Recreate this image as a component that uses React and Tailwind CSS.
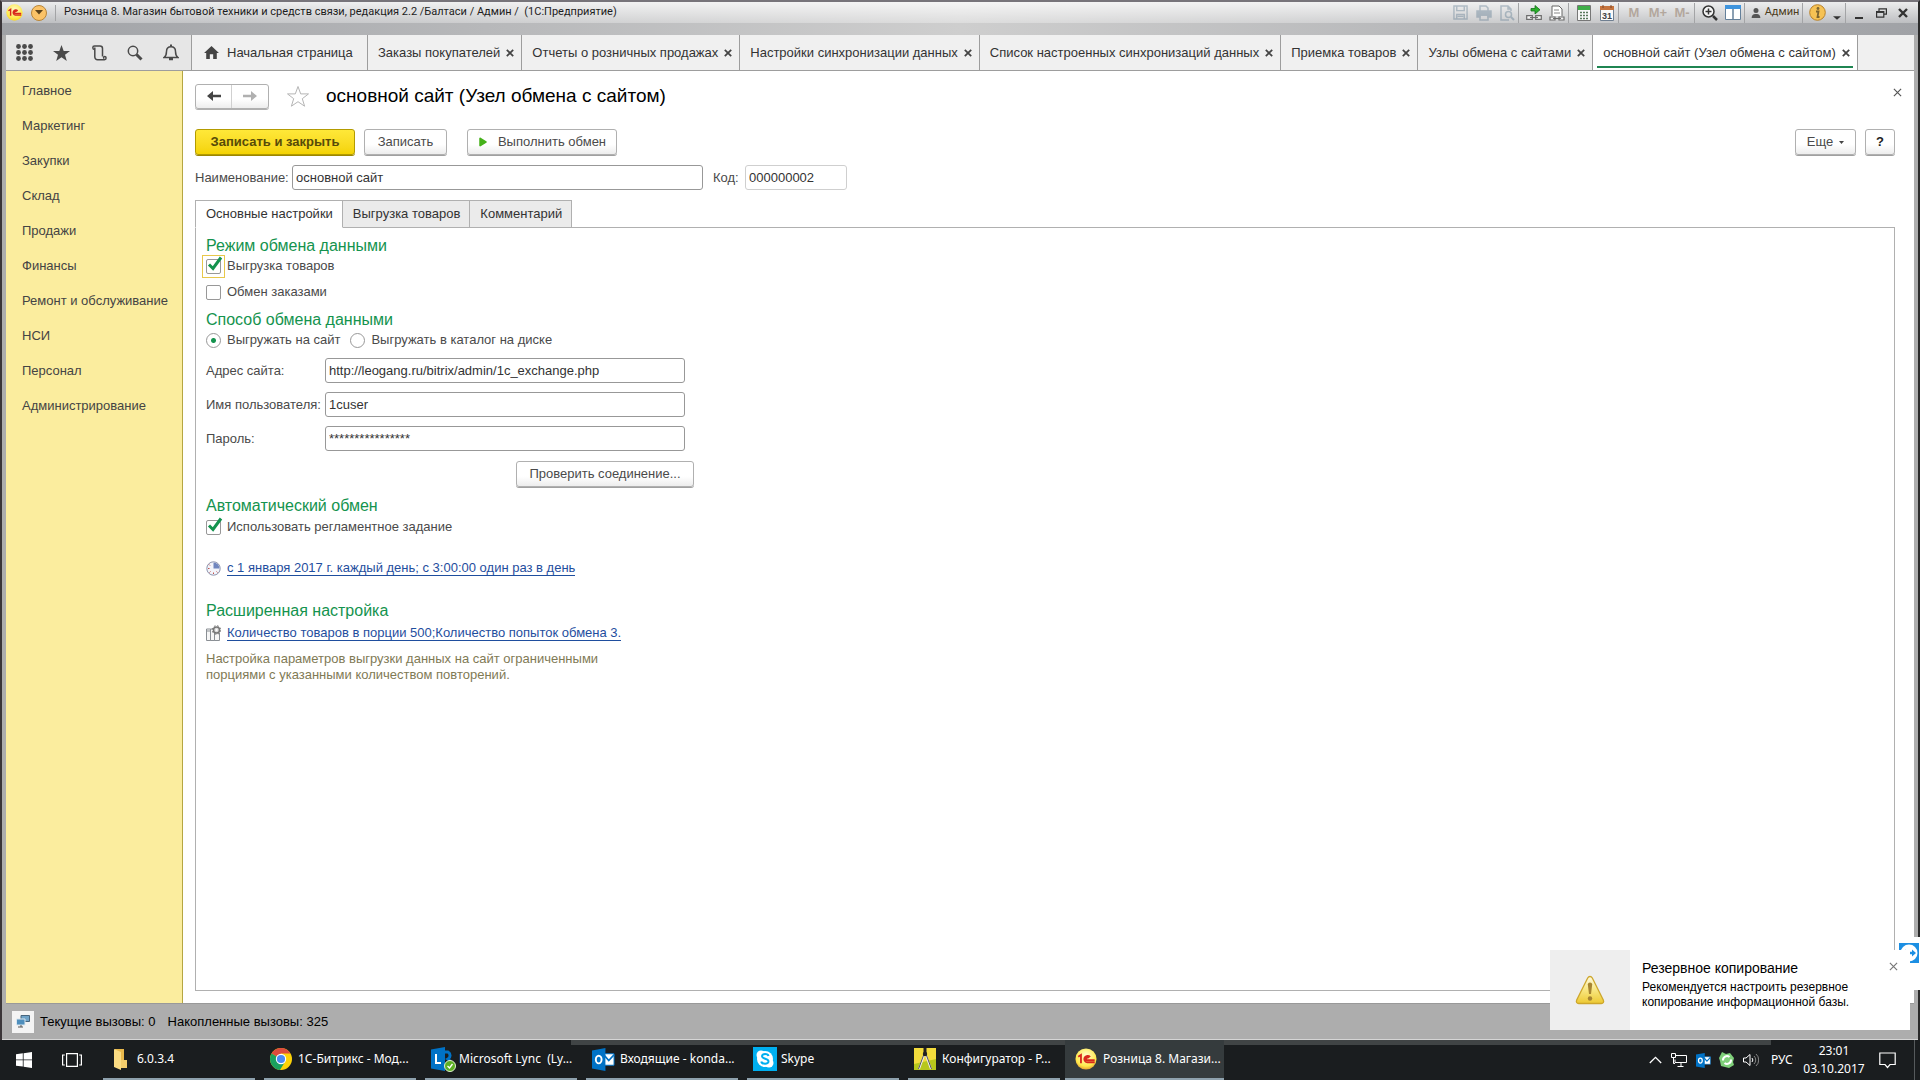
import { useState } from 'react';
import { FaStar, FaUser, FaPlay } from 'react-icons/fa6';
import { clsx } from 'clsx';

const openTabs = [
  { title: 'Заказы покупателей' },
  { title: 'Отчеты о розничных продажах' },
  { title: 'Настройки синхронизации данных' },
  { title: 'Список настроенных синхронизаций данных' },
  { title: 'Приемка товаров' },
  { title: 'Узлы обмена с сайтами' },
  { title: 'основной сайт (Узел обмена с сайтом)', active: true },
];

const sections = [
  'Главное',
  'Маркетинг',
  'Закупки',
  'Склад',
  'Продажи',
  'Финансы',
  'Ремонт и обслуживание',
  'НСИ',
  'Персонал',
  'Администрирование',
];

const formTabs = ['Основные настройки', 'Выгрузка товаров', 'Комментарий'];

const Cross = ({ size = 9, width = 2 }) => (
  <svg width={size} height={size} viewBox="0 0 10 10" fill="none" stroke="currentColor" strokeWidth={width}>
    <path d="M1 1l8 8M9 1l-8 8" />
  </svg>
);

const OneC = ({ size, id, rim }) => (
  <svg width={size} height={size} viewBox="0 0 24 24">
    <defs>
      <radialGradient id={id} cx="0.5" cy="0.35" r="0.7">
        <stop offset="0" stopColor="#fffbd0" />
        <stop offset="0.7" stopColor="#ffe94a" />
        <stop offset="1" stopColor={rim} />
      </radialGradient>
    </defs>
    <circle cx="12" cy="12" r="11.5" fill={`url(#${id})`} />
    <path d="M3.500 9.500l3-2v9M16.500 9.800a3.600 3.600 0 1 0-3.200 5.900H21.500M14.800 11.200a1.500 1.500 0 1 0-1.400 2.200H21.500" fill="none" stroke="#d8281c" strokeWidth="2" />
  </svg>
);

const Separator = () => <span className="h-5 w-1 shrink-0 border-l border-[#a3a4a6]" />;

const ToolIcon = ({ label, faded, children }) => (
  <button aria-label={label} className={clsx('flex h-5 w-[23px] shrink-0 items-center justify-center', faded && 'opacity-40')}>
    {children}
  </button>
);

const LinkChain = () => (
  <path d="M1 12h5v3H1zM10 12h5v3h-5zM4 13.500h8" fill="#f4f4f4" stroke="#6d6d6d" strokeWidth="1.200" />
);

const TitleBar = () => (
  <header className="h-[33px] bg-linear-to-r from-[#a0a2a6] via-[#cecece] to-[#a0a2a6] text-xs text-[#1c1c1c]">
    <div className="flex h-[21px] items-center bg-linear-to-b from-white/80 to-white/30 pr-[5px] pl-1">
      <div className="flex items-center gap-2">
        <OneC size={17} id="onec-title" rim="#f5cf1c" />
        <button aria-label="Меню" className="flex size-4 items-center justify-center rounded-full border border-[#b98538] bg-[#fbc368]">
          <svg width="8" height="5" viewBox="0 0 8 5"><path d="M0 0h8L4 4.500z" fill="#5c431c" /></svg>
        </button>
        <span className="h-4 border-l border-[#a3a4a6]" />
        <span className="font-[Roboto,sans-serif] text-[11px] whitespace-pre">
          Розница 8. Магазин бытовой техники и средств связи, редакция 2.2 /Балтаси / Админ /  (1С:Предприятие)
        </span>
      </div>
      <div className="ml-auto flex items-center">
        <ToolIcon label="Сохранить" faded>
          <svg width="15" height="15" viewBox="0 0 16 16" fill="none" stroke="#5d7a90" strokeWidth="1.500"><path d="M1 1h14v14H1zM4 1v5h8V1M4 15v-5h8v5M5 12h6" /></svg>
        </ToolIcon>
        <ToolIcon label="Печать" faded>
          <svg width="16" height="16" viewBox="0 0 16 16" fill="none" stroke="#5d7a90" strokeWidth="1.500"><path d="M4 6V1h6l2 2v3M4 10h8v5H4z" /><path d="M1 6h14v6h-3v-2H4v2H1z" fill="#5d7a90" /></svg>
        </ToolIcon>
        <ToolIcon label="Просмотр" faded>
          <svg width="16" height="16" viewBox="0 0 16 16" fill="none" stroke="#5d7a90" strokeWidth="1.500"><path d="M10 15H2V1h7l3 3v2M9 1v3h3" /><circle cx="9.500" cy="9.500" r="3" /><path d="M12 12l3 3" strokeWidth="2" /></svg>
        </ToolIcon>
        <Separator />
        <ToolIcon label="Получить ссылку">
          <svg width="16" height="16" viewBox="0 0 16 16"><path d="M.7 10.700h5.600v3.600H.7zM9.700 10.700h5.600v3.600H9.700zM4 12.500h8" fill="#f4f4f4" stroke="#6d6d6d" strokeWidth="1.200" /><path d="M5 3.500h4V.5l5 4.300L9 9V6H5z" fill="#2bb02b" stroke="#14701a" strokeWidth="0.800" /></svg>
        </ToolIcon>
        <ToolIcon label="Перейти по ссылке">
          <svg width="16" height="16" viewBox="0 0 16 16"><path d="M3 11V1h7l3 3v7" fill="#fff" stroke="#666" /><path d="M5 5h5M5 8h6" stroke="#888" /><LinkChain /></svg>
        </ToolIcon>
        <Separator />
        <ToolIcon label="Калькулятор">
          <svg width="14" height="16" viewBox="0 0 14 16"><path d="M.5.500h13v15H.5z" fill="#f8f8f8" stroke="#777" /><path d="M1 1h12v4H1z" fill="#3fae49" /><path d="M3 7.500h8M3 10.500h8M3 13.500h8" stroke="#5a7a5c" strokeWidth="1.700" strokeDasharray="2 1" /></svg>
        </ToolIcon>
        <ToolIcon label="Календарь">
          <svg width="14" height="16" viewBox="0 0 14 16">
            <path d="M.5 2.500h13v13H.5z" fill="#fafafa" stroke="#6f7f91" /><path d="M0 1h14v4H0z" fill="#c5733d" /><path d="M3 0v3M11 0v3" stroke="#7d4728" />
            <text x="7" y="13.500" textAnchor="middle" fontSize="9" fontWeight="bold" fontFamily="Liberation Sans, sans-serif" fill="#444">31</text>
          </svg>
        </ToolIcon>
        <Separator />
        {['M', 'M+', 'M-'].map((m) => (
          <button key={m} className="w-6 text-center font-['Liberation_Sans',sans-serif] text-[13px] font-bold text-[#b3a79d]">{m}</button>
        ))}
        <Separator />
        <ToolIcon label="Масштаб">
          <svg width="16" height="16" viewBox="0 0 16 16" fill="none" stroke="#333" strokeWidth="1.500"><circle cx="6.500" cy="6.500" r="5.500" fill="#f6f6f6" /><path d="M3.500 6.500h6M6.500 3.500v6" /><path d="M11 11l4 4" strokeWidth="2.500" /></svg>
        </ToolIcon>
        <ToolIcon label="Панели">
          <svg width="16" height="15" viewBox="0 0 16 15"><path d="M.5.500h15v14H.5z" fill="#fff" stroke="#64809a" /><path d="M0 0h16v4H0z" fill="#3f94dd" /><path d="M8 4v11" stroke="#64809a" strokeWidth="1.500" /></svg>
        </ToolIcon>
        <Separator />
        <button className="flex w-[54px] items-center justify-center gap-1 font-[Roboto,sans-serif] text-[11px] text-[#4c3d1d]">
          <FaUser size={10} className="text-[#555]" />
          Админ
        </button>
        <Separator />
        <ToolIcon label="О программе">
          <svg width="17" height="17" viewBox="0 0 17 17"><circle cx="8.500" cy="8.500" r="7.800" fill="#f6c254" stroke="#b9822a" /><circle cx="9" cy="4.500" r="1.400" fill="#7c6430" /><path d="M7 7.500h2.500L8.500 13h2" fill="none" stroke="#7c6430" strokeWidth="1.800" /></svg>
        </ToolIcon>
        <button aria-label="Еще команды" className="flex h-5 w-4 items-end justify-center pb-[3px]">
          <svg width="8" height="4" viewBox="0 0 9 4"><path d="M0 0h9L4.500 4z" fill="#333" /></svg>
        </button>
        <Separator />
        <button aria-label="Свернуть" className="flex h-5 w-5 items-end justify-center pb-1">
          <span className="h-0.5 w-2 bg-[#333]" />
        </button>
        <button aria-label="Развернуть" className="flex h-5 w-6 items-center justify-center">
          <svg width="11" height="10" viewBox="0 0 11 10" fill="none" stroke="#333" strokeWidth="1.200"><path d="M3 3V.8h7.400v5.400H8M.6 3.500h7.200v5.700H.6z" /><path d="M.6 4.200h7.200" strokeWidth="1.500" /></svg>
        </button>
        <button aria-label="Закрыть" className="flex h-5 w-5 items-center justify-center text-[#333]"><Cross size={10} width={2.4} /></button>
      </div>
    </div>
  </header>
);

const TabStrip = () => (
  <nav className="flex h-9 border-b border-[#9d9d9d] bg-[#f0f0f0] text-[#333]">
    <div className="flex w-[185px] shrink-0 items-center justify-between bg-[#e6e6e6] pr-3 pl-[10px] text-[#4a4a4a]">
      <button aria-label="Меню функций">
        <svg width="17" height="17" viewBox="0 0 17 17" fill="currentColor">
          {[2.5, 8.5, 14.5].map((y) => [2.5, 8.5, 14.5].map((x) => <circle key={`${x}${y}`} cx={x} cy={y} r="2.400" />))}
        </svg>
      </button>
      <button aria-label="Избранное">
        <svg width="17" height="16" viewBox="0 0 17 16" fill="currentColor"><path d="M8.500 0l2.200 5.900h6.300l-5 3.900 1.800 6.200-5.300-3.700L3.200 16 5 9.800 0 5.900h6.300z" /></svg>
      </button>
      <button aria-label="История">
        <svg width="16" height="16" viewBox="0 0 16 16" fill="none" stroke="currentColor" strokeWidth="1.500"><path d="M3.500 4.500a1.700 1.700 0 1 1 0-3.400H9a2.500 2.500 0 0 1 2.500 2.500V11.500" /><path d="M3.800 2.500v9.500a2.700 2.700 0 0 0 2.700 2.700h7a1.600 1.600 0 1 0 0-3.200c-1.200 0-1.200 1.700-.2 1.700" /></svg>
      </button>
      <button aria-label="Поиск">
        <svg width="16" height="16" viewBox="0 0 16 16" fill="none" stroke="currentColor"><circle cx="6" cy="6" r="4.700" strokeWidth="1.500" /><path d="M9.500 9.500l5 5" strokeWidth="3" /></svg>
      </button>
      <button aria-label="Оповещения">
        <svg width="16" height="17" viewBox="0 0 16 17" fill="none" stroke="currentColor" strokeWidth="1.500"><path d="M1 13.500c2-1.500 2.500-3 2.500-6 0-3 2-4.800 4.500-4.800s4.500 1.800 4.500 4.800c0 3 .5 4.500 2.500 6z" /><path d="M8 .5v2" strokeWidth="2" /><path d="M6 15h4" strokeWidth="2.500" /></svg>
      </button>
    </div>
    <button className="flex w-44 items-center gap-2 border-l border-[#9d9d9d] pl-3 whitespace-nowrap">
      <svg width="15" height="13" viewBox="0 0 16 14" fill="#444"><path d="M8 0l8 7.500h-2.300V14H9.800V9H6.200v5H2.300V7.500H0z" /></svg>
      Начальная страница
    </button>
    {openTabs.map((tab) => (
      <div
        key={tab.title}
        className={clsx(
          'relative flex items-center gap-[6px] border-l border-[#9d9d9d] pr-[7px] pl-[10px] whitespace-nowrap',
          tab.active && 'border-r bg-white'
        )}
      >
        <button>{tab.title}</button>
        <button aria-label="Закрыть вкладку" className="text-[#444]"><Cross size={8} width={2.2} /></button>
        {tab.active && <span className="absolute inset-x-1 bottom-0.5 h-0.5 bg-[#1f8552]" />}
      </div>
    ))}
  </nav>
);

const Button = ({ className, primary, children, ...props }) => (
  <button
    className={clsx(
      'flex h-[26px] items-center justify-center rounded-[3px] border whitespace-nowrap',
      primary
        ? 'border-[#b39b00] bg-linear-to-b from-[#ffe838] to-[#f4d300] font-bold text-[#574b09] shadow-[0_1px_0_#9c8700]'
        : 'border-[#b0b0b0] bg-linear-to-b from-white from-60% to-[#ededed] shadow-[0_1px_0_#a0a0a0]',
      className
    )}
    {...props}
  >
    {children}
  </button>
);

const Heading = ({ className, children }) => (
  <h2 className={clsx('text-base leading-5 text-[#14934e]', className)}>{children}</h2>
);

const Check = ({ label, focused, defaultChecked }) => {
  const [checked, setChecked] = useState(!!defaultChecked);
  return (
    <label className="flex h-5 w-fit items-center gap-[6px]">
      <span className={clsx('relative flex', focused && 'outline outline-offset-3 outline-[#e8c84a]')}>
        <input
          type="checkbox"
          checked={checked}
          onChange={(e) => setChecked(e.target.checked)}
          className="size-[15px] appearance-none rounded-[2px] border border-[#989898] bg-white focus:outline-none"
        />
        {checked && (
          <svg className="pointer-events-none absolute -top-1 left-0" width="18" height="17" viewBox="0 0 18 17" fill="none" stroke="#14934e" strokeWidth="3">
            <path d="M3 9.500l4 4L15 2.500" />
          </svg>
        )}
      </span>
      {label}
    </label>
  );
};

const Radio = ({ label, checked, onChange }) => (
  <label className="flex items-center gap-[6px]">
    <input
      type="radio"
      name="method"
      checked={checked}
      onChange={onChange}
      className="size-[15px] appearance-none rounded-full border border-[#989898] bg-white checked:bg-[radial-gradient(circle,#14934e_2px,white_3px)]"
    />
    {label}
  </label>
);

const inputClass = 'h-[25px] rounded-[3px] border border-[#989898] bg-white px-[3px] text-[#333] focus:outline-none';

const Field = ({ id, label, ...props }) => (
  <div className="flex items-center">
    <label htmlFor={id} className="w-[119px] shrink-0 whitespace-nowrap">{label}</label>
    <input id={id} className={clsx(inputClass, 'w-[360px]')} {...props} />
  </div>
);

const MainSettings = () => {
  const [method, setMethod] = useState('site');
  return (
    <div className="flex-1 border border-[#b0b0b0] bg-white px-[10px] pt-2">
      <Heading>Режим обмена данными</Heading>
      <Check label="Выгрузка товаров" focused defaultChecked />
      <div className="mt-[6px]"><Check label="Обмен заказами" /></div>
      <Heading className="mt-2">Способ обмена данными</Heading>
      <div className="flex h-5 items-center gap-[10px]">
        <Radio label="Выгружать на сайт" checked={method === 'site'} onChange={() => setMethod('site')} />
        <Radio label="Выгружать в каталог на диске" checked={method === 'disk'} onChange={() => setMethod('disk')} />
      </div>
      <div className="mt-2 flex flex-col gap-[9px]">
        <Field id="url" label="Адрес сайта:" defaultValue="http://leogang.ru/bitrix/admin/1c_exchange.php" />
        <Field id="user" label="Имя пользователя:" defaultValue="1cuser" />
        <Field id="password" label="Пароль:" defaultValue="****************" />
      </div>
      <div className="mt-[10px] flex w-[488px] justify-end">
        <Button className="w-[178px]">Проверить соединение...</Button>
      </div>
      <Heading className="mt-[9px]">Автоматический обмен</Heading>
      <div className="mt-px"><Check label="Использовать регламентное задание" defaultChecked /></div>
      <div className="mt-[21px] flex h-5 items-center gap-[6px]">
        <svg width="15" height="15" viewBox="0 0 15 15"><circle cx="7.500" cy="7.500" r="6.700" fill="#f3f5fb" stroke="#8b93ad" /><path d="M7.500 7.500V1.500a6 6 0 0 1 6 6z" fill="#6f86bf" /><path d="M3 3.500l1 1M2 7.500h1.500M3.500 11.500l1-1M7.500 13v-1.500M11.500 11.500l-1-1" stroke="#c0504d" /></svg>
        <a href="#schedule" className="border-b border-[#1f4e9e] leading-[14px] text-[#1f4e9e]">с 1 января 2017 г. каждый день; с 3:00:00 один раз в день</a>
      </div>
      <Heading className="mt-[23px]">Расширенная настройка</Heading>
      <div className="mt-[2px] flex h-5 items-center gap-[6px]">
        <svg width="15" height="16" viewBox="0 0 15 16" fill="none" stroke="#8a8f94"><path d="M.5 4h4v11.500h-4zM4.500 4h4v11.500h-4zM8.500 8h5v7.500h-5z" fill="#f6f6f6" /><path d="M.5 6h4" /><circle cx="10.500" cy="5" r="3" fill="#ddd" stroke="#777" strokeWidth="1.500" /><circle cx="10.500" cy="5" r="4.300" stroke="#777" strokeDasharray="1.700 1.700" /><circle cx="10.500" cy="5" r="1" fill="#fff" stroke="none" /></svg>
        <a href="#advanced" className="border-b border-[#1f4e9e] leading-[14px] text-[#1f4e9e]">Количество товаров в порции 500;Количество попыток обмена 3.</a>
      </div>
      <p className="mt-2 w-[420px] leading-4 text-[#7f7a55]">
        Настройка параметров выгрузки данных на сайт ограниченными порциями с указанными количеством повторений.
      </p>
    </div>
  );
};

const ExchangeNodeForm = () => {
  const [tab, setTab] = useState(0);
  return (
    <main className="flex flex-1 flex-col bg-white p-3">
      <div className="flex h-[26px] items-center">
        <div className="flex h-[25px] rounded-[3px] border border-[#b0b0b0] bg-linear-to-b from-white from-60% to-[#ededed] shadow-[0_1px_0_#b0b0b0]">
          <button aria-label="Назад" className="flex w-9 items-center justify-center border-r border-[#d0d0d0]">
            <svg width="14" height="10" viewBox="0 0 14 10" fill="#444"><path d="M0 5l6-5v3.700h8v2.600H6V10z" /></svg>
          </button>
          <button aria-label="Вперед" className="flex w-9 items-center justify-center">
            <svg width="14" height="10" viewBox="0 0 14 10" fill="#b0b0b0"><path d="M14 5L8 0v3.700H0v2.600h8V10z" /></svg>
          </button>
        </div>
        <button aria-label="В избранное" className="ml-[17px]">
          <svg width="24" height="23" viewBox="0 0 24 23" fill="none" stroke="#b5b5b5"><path d="M12 1.500l2.700 7.400h7.800l-6.200 4.800 2.300 7.500-6.600-4.500-6.600 4.500 2.300-7.500L1.500 8.900h7.800z" /></svg>
        </button>
        <h1 className="ml-4 text-[19px] leading-6 text-black">основной сайт (Узел обмена с сайтом)</h1>
        <button aria-label="Закрыть форму" className="mb-2 ml-auto text-[#555]"><Cross size={9} width={1.3} /></button>
      </div>

      <div className="mt-5 flex">
        <Button primary className="w-40">Записать и закрыть</Button>
        <Button className="ml-[9px] w-[83px]">Записать</Button>
        <Button className="ml-5 w-[150px] gap-[10px]">
          <FaPlay size={10} className="text-[#45b11a]" />
          Выполнить обмен
        </Button>
        <Button className="mr-[9px] ml-auto w-[61px] gap-[6px]">
          Еще
          <svg width="5" height="3" viewBox="0 0 5 3"><path d="M0 0h5L2.500 3z" fill="#444" /></svg>
        </Button>
        <Button aria-label="Справка" className="mr-[7px] w-[30px] font-bold text-[#222]">?</Button>
      </div>

      <div className="mt-[10px] flex items-center">
        <label htmlFor="name" className="w-[97px]">Наименование:</label>
        <input id="name" className={clsx(inputClass, 'w-[411px]')} defaultValue="основной сайт" />
        <label htmlFor="code" className="ml-[10px] w-8">Код:</label>
        <input id="code" className={clsx(inputClass, 'w-[102px] border-[#cfcfcf]')} defaultValue="000000002" />
      </div>

      <div className="mt-[10px] mr-[7px] flex flex-1 flex-col">
        <div role="tablist" className="relative z-10 -mb-px flex text-[#333]">
          {formTabs.map((name, i) => (
            <button
              key={name}
              role="tab"
              aria-selected={tab === i}
              onClick={() => setTab(i)}
              className={clsx(
                'h-7 border border-[#b0b0b0] pr-[9px] pl-[10px] not-first:border-l-0',
                tab === i ? 'border-b-white bg-white' : 'bg-[#ebebeb]'
              )}
            >
              {name}
            </button>
          ))}
        </div>
        {tab === 0 ? <MainSettings /> : <div className="flex-1 border border-[#b0b0b0]" />}
      </div>
    </main>
  );
};

const StatusBar = () => (
  <footer className="flex h-9 items-center border-t border-[#999] bg-[#adadad] px-[6px] text-black">
    <span className="flex size-[22px] items-center justify-center bg-[#f4f4f4]">
      <svg width="14" height="13" viewBox="0 0 14 13"><path d="M5 .5h8.500v6H5z" fill="#6fa3c8" stroke="#47657c" /><path d="M.5 4h8.500v6H.5z" fill="#4f8fbd" stroke="#dbe6ee" /><path d="M2 12h5M5 10v2" stroke="#555" /></svg>
    </span>
    <span className="ml-[6px]">Текущие вызовы: 0</span>
    <span className="ml-3">Накопленные вызовы: 325</span>
  </footer>
);

const Notification = () => (
  <aside className="absolute right-[10px] bottom-[50px] flex h-20 w-[360px] bg-white text-black">
    <div className="flex w-20 items-center justify-center bg-[#eee]">
      <svg width="30" height="30" viewBox="0 0 30 30">
        <defs><linearGradient id="warn" x1="0" y1="0" x2="0" y2="1"><stop offset="0" stopColor="#fffbe0" /><stop offset="0.500" stopColor="#f8e680" /><stop offset="1" stopColor="#edc932" /></linearGradient></defs>
        <path d="M15 1.500c1 0 1.800.6 2.300 1.500l11 22c.9 2-.1 3.500-2 3.500H3.700c-1.900 0-2.900-1.500-2-3.500l11-22c.5-.9 1.300-1.500 2.300-1.500z" fill="url(#warn)" stroke="#cda62c" strokeWidth="1.300" />
        <path d="M12.800 9.500c0-2.800 4.400-2.800 4.400 0L16 19h-2z" fill="#a68431" /><circle cx="15" cy="23.500" r="2.200" fill="#a68431" />
      </svg>
    </div>
    <div className="flex-1 pt-[10px] pl-3">
      <h3 className="text-sm leading-4">Резервное копирование</h3>
      <p className="mt-1 text-xs leading-[15px]">Рекомендуется настроить резервное<br />копирование информационной базы.</p>
    </div>
    <button aria-label="Закрыть уведомление" className="absolute top-3 right-3 text-[#777]"><Cross size={9} width={1.3} /></button>
  </aside>
);

const TeamViewerTab = () => (
  <div className="absolute right-0 bottom-[90px] h-[53px] w-6 rounded-tl-md bg-white pt-[6px] pl-[3px]">
    <svg width="20" height="20" viewBox="0 0 20 20"><path d="M0 0h20v20H0z" fill="#1c8fe3" /><circle cx="10" cy="10" r="8.500" fill="#fff" /><path d="M3 10l4-3.500v2.300h6V6.500l4 3.500-4 3.500v-2.300H7v2.300z" fill="#1c8fe3" /></svg>
  </div>
);

const OutlookIcon = ({ size }) => (
  <svg width={size} height={size} viewBox="0 0 24 24">
    <path d="M12 6h11v12H12z" fill="#fff" stroke="#0072c6" /><path d="M13 8l4.500 5L23 7" fill="none" stroke="#0072c6" strokeWidth="1.800" />
    <path d="M0 2.500L14 0v24L0 21.500z" fill="#0072c6" /><ellipse cx="7" cy="12" rx="3" ry="4" fill="none" stroke="#fff" strokeWidth="2" />
  </svg>
);

const taskItems = [
  {
    title: '6.0.3.4',
    icon: <svg width="24" height="24" viewBox="0 0 24 24"><path d="M6 2h9v18H6z" fill="#e8b84c" /><path d="M5 2l7 3v18l-7-3z" fill="#fbdc83" /><path d="M12 13h6v8h-6z" fill="#f3cd6c" /></svg>,
  },
  {
    title: '1С-Битрикс - Мод...',
    icon: (
      <svg width="22" height="22" viewBox="0 0 22 22">
        <circle cx="11" cy="11" r="11" fill="#fcd209" />
        <path d="M11 11L1.500 5.500A11 11 0 0 1 20.500 5.500H11z" fill="#dd4b3e" />
        <path d="M11 11L1.500 5.500A11 11 0 0 0 10 22l5.500-9z" fill="#1aa15f" />
        <circle cx="11" cy="11" r="5.200" fill="#fff" /><circle cx="11" cy="11" r="4.100" fill="#4a8af4" />
      </svg>
    ),
  },
  {
    title: 'Microsoft Lync  (Ly...',
    icon: (
      <svg width="25" height="25" viewBox="0 0 25 25">
        <path d="M13 5h4a4 4 0 0 1 0 7 4 4 0 0 1 0 7h-4" fill="none" stroke="#0072c6" strokeWidth="3" />
        <path d="M0 2.500L14 0v24L0 21.500z" fill="#0072c6" /><path d="M5 7v9h5" fill="none" stroke="#fff" strokeWidth="2" />
        <circle cx="19" cy="19" r="5.500" fill="#5db023" stroke="#dff0cf" /><path d="M16.500 19l2 2 3-4" fill="none" stroke="#fff" strokeWidth="1.300" />
      </svg>
    ),
  },
  { title: 'Входящие - konda...', icon: <OutlookIcon size={23} /> },
  {
    title: 'Skype',
    icon: (
      <svg width="24" height="24" viewBox="0 0 24 24">
        <path d="M0 0h24v24H0z" fill="#00aff0" /><circle cx="12" cy="12" r="8" fill="#fff" /><circle cx="8" cy="8" r="4.500" fill="#fff" /><circle cx="16" cy="16" r="4.500" fill="#fff" />
        <path d="M15.500 9c-.5-2.500-6.500-2.800-6.500.2C9 12.500 15.500 11 15.500 14.500c0 3-6.800 2.800-7.200 0" fill="none" stroke="#00aff0" strokeWidth="2" />
      </svg>
    ),
  },
  {
    title: 'Конфигуратор - Р...',
    icon: (
      <svg width="22" height="22" viewBox="0 0 22 22"><path d="M0 0h22v22H0z" fill="#f3dc3c" /><path d="M0 16l22-5v11H0z" fill="#b7c71c" /><path d="M10.500 6L5 21M11.500 6L17 21" stroke="#eee" strokeWidth="2" /><path d="M10 6L4.500 21M12 6L17.500 21" stroke="#555" fill="none" /><path d="M11 0v7" stroke="#222" strokeWidth="3" /><circle cx="11" cy="6" r="2.200" fill="#222" /></svg>
    ),
  },
  { title: 'Розница 8. Магази...', icon: <OneC size={22} id="onec-task" rim="#e08a2c" />, active: true },
];

const Taskbar = () => (
  <div className="relative flex h-10 bg-[#1a1d1f] font-['Noto_Sans',sans-serif] text-xs text-white">
    <span className="absolute top-0 right-[149px] left-[571px] h-[5px] bg-[#404445]" />
    <button aria-label="Пуск" className="flex w-12 items-center justify-center">
      <svg width="16" height="16" viewBox="0 0 16 16" fill="#fff"><path d="M0 2.300l6.800-1v6.200H0zM7.600 1.200L16 0v7.500H7.600zM0 8.300h6.800v6.300L0 13.700zM7.600 8.300H16V16l-8.400-1.200z" /></svg>
    </button>
    <button aria-label="Представление задач" className="mr-[7px] flex w-12 items-center justify-center">
      <svg width="20" height="14" viewBox="0 0 20 14" fill="none" stroke="#fff" strokeWidth="1.200"><path d="M4.600.6h10.800v12.800H4.600zM2.800 2H.6v10h2.200M17.200 2h2.200v10h-2.200" /></svg>
    </button>
    <div className="flex gap-[9px]">
      {taskItems.map((item) => (
        <button
          key={item.title}
          className={clsx(
            'relative flex w-[152px] items-center border-b-2 border-[#8ea1ad] pl-[6px] whitespace-pre',
            item.active && '-ml-1 w-[159px] bg-[#353b3d] pl-[10px]'
          )}
        >
          <span className="flex w-7 items-center">{item.icon}</span>
          {item.title}
        </button>
      ))}
    </div>
    <div className="mr-[5px] ml-auto flex items-center border-r border-[#565a5c] pr-[18px]">
      <button aria-label="Скрытые значки" className="flex w-6 justify-center">
        <svg width="13" height="8" viewBox="0 0 13 8" fill="none" stroke="#fff" strokeWidth="1.300"><path d="M.8 7l5.700-5.700L12.200 7" /></svg>
      </button>
      <span className="flex w-6 justify-center">
        <svg width="16" height="14" viewBox="0 0 16 14" fill="none" stroke="#fff"><path d="M5 2.500h10.500v7H4v-3M10 9.500v4M6.500 13.500h6M.5.500h4v4h-4zM2.500 4.500v6H4" /></svg>
      </span>
      <span className="flex w-6 justify-center"><OutlookIcon size={15} /></span>
      <span className="flex w-6 justify-center">
        <svg width="16" height="16" viewBox="0 0 16 16"><path d="M3 0l4 2 4-1 4 5-1 4 1 3-5 3-4-1-4-1-1-5L0 6z" fill="#7fd07a" /><path d="M4 8.500A4 4 0 0 1 10.500 5M12 7.500A4 4 0 0 1 5.500 11" fill="none" stroke="#fff" strokeWidth="2" /></svg>
      </span>
      <span className="flex w-6 justify-center">
        <svg width="16" height="14" viewBox="0 0 16 14" fill="none" stroke="#fff"><path d="M.5 5h2.500l4-3.500v11L3 9H.5z" /><path d="M9 5a3 3 0 0 1 0 4" /><path d="M11 3a5.500 5.500 0 0 1 0 8M13 1a8 8 0 0 1 0 12" stroke="#888" /></svg>
      </span>
      <span className="ml-2 w-[26px]">РУС</span>
      <span className="w-[74px] text-center leading-[18px]">23:01<br />03.10.2017</span>
      <button aria-label="Центр уведомлений" className="ml-2">
        <svg width="17" height="17" viewBox="0 0 17 17" fill="none" stroke="#fff" strokeWidth="1.200"><path d="M.8 1h15.400v11.500H11L8.500 15.500 6 12.500H.8z" /></svg>
      </button>
    </div>
  </div>
);

const App = () => {
  return (
    <div className="relative flex min-h-screen flex-col bg-[#1a1d1f] font-['Liberation_Sans',Arial,sans-serif] text-[13px] leading-4 text-[#4a4a4a]">
      <div className="flex flex-1 flex-col border-x-2 border-t-2 border-t-[#77747a] border-r-[#2a2a2a] border-l-[#3a3538] bg-[#adadad]">
        <TitleBar />
        <div className="flex flex-1 flex-col px-1">
          <TabStrip />
          <div className="flex flex-1">
            <nav className="w-[177px] shrink-0 border-r border-[#b5a642] bg-[#fbed9e] px-4 pt-[10px] text-[#444]">
              {sections.map((name) => (
                <a key={name} href="#section" className="mb-[15px] block leading-5 whitespace-nowrap">{name}</a>
              ))}
            </nav>
            <ExchangeNodeForm />
          </div>
          <StatusBar />
        </div>
        <div className="h-px bg-[#d5d5d5]" />
      </div>
      <Taskbar />
      <TeamViewerTab />
      <Notification />
    </div>
  );
};

export default App;
